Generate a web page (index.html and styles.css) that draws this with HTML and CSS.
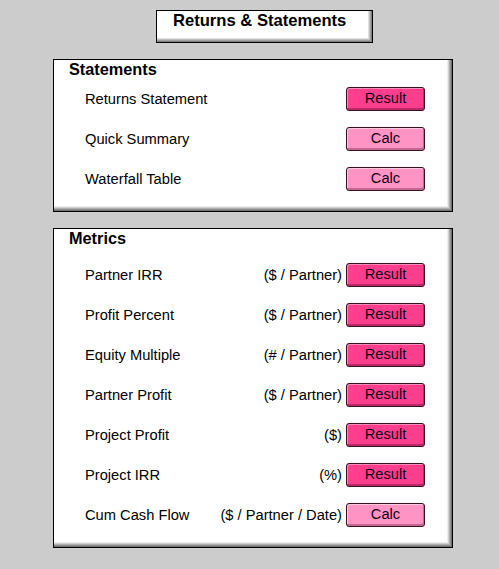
FILE: index.html
```html
<!DOCTYPE html>
<html>
<head>
<meta charset="utf-8">
<link rel="stylesheet" href="styles.css">
</head>
<body>
<div class="title">Returns &amp; Statements</div>

<div class="panel panel-statements">
  <div class="heading">Statements</div>
  <div class="rows">
    <div class="row"><span class="label">Returns Statement</span><span class="btn btn-result">Result</span></div>
    <div class="row"><span class="label">Quick Summary</span><span class="btn btn-calc">Calc</span></div>
    <div class="row"><span class="label">Waterfall Table</span><span class="btn btn-calc">Calc</span></div>
  </div>
</div>

<div class="panel panel-metrics">
  <div class="heading">Metrics</div>
  <div class="rows">
    <div class="row"><span class="label">Partner IRR</span><span class="unit">($ / Partner)</span><span class="btn btn-result">Result</span></div>
    <div class="row"><span class="label">Profit Percent</span><span class="unit">($ / Partner)</span><span class="btn btn-result">Result</span></div>
    <div class="row"><span class="label">Equity Multiple</span><span class="unit">(# / Partner)</span><span class="btn btn-result">Result</span></div>
    <div class="row"><span class="label">Partner Profit</span><span class="unit">($ / Partner)</span><span class="btn btn-result">Result</span></div>
    <div class="row"><span class="label">Project Profit</span><span class="unit">($)</span><span class="btn btn-result">Result</span></div>
    <div class="row"><span class="label">Project IRR</span><span class="unit">(%)</span><span class="btn btn-result">Result</span></div>
    <div class="row"><span class="label">Cum Cash Flow</span><span class="unit">($ / Partner / Date)</span><span class="btn btn-calc">Calc</span></div>
  </div>
</div>
</body>
</html>
```

FILE: styles.css
```css
* { box-sizing: border-box; }
html, body {
  margin: 0;
  padding: 0;
  background: #cccccc;
  font-family: "Liberation Sans", Arial, sans-serif;
  color: #000;
}
body {
  padding-top: 10px;
  width: 499px;
  height: 569px;
  overflow: hidden;
}
.title {
  margin-left: 156px;
  width: 217px;
  height: 33px;
  background: #fff;
  border: 1px solid #000;
  box-shadow: inset -1px -1px 0 #808080, inset -2px -2px 0 #a0a0a0, inset -3px -3px 0 #c0c0c0, inset -4px -4px 0 #e0e0e0;
  font-weight: bold;
  font-size: 16.6px;
  line-height: 19px;
  padding-left: 16px;
  padding-top: 0px;
}
.panel {
  margin-left: 53px;
  width: 400px;
  background: #fff;
  border: 1px solid #000;
  box-shadow: inset -1px -1px 0 #707070, inset -2px -2px 0 #909090, inset -3px -3px 0 #b0b0b0, inset -4px -4px 0 #d0d0d0, inset -5px -5px 0 #ececec;
  padding: 0 27px 12px 0;
}
.panel-statements {
  margin-top: 16px;
  height: 153px;
}
.panel-metrics {
  margin-top: 16px;
  height: 320px;
}
.heading {
  font-weight: bold;
  font-size: 16.3px;
  line-height: 18px;
  padding-left: 15px;
}
.panel-statements .rows { margin-top: 1px; }
.panel-metrics .rows { margin-top: 8px; }
.row {
  display: flex;
  align-items: center;
  height: 40px;
  padding-left: 31px;
  font-size: 14.7px;
}
.label { flex: 1; }
.unit { margin-right: 4px; }
.btn {
  width: 79px;
  height: 24px;
  border: 1px solid #3a1020;
  border-radius: 3px;
  text-align: center;
  line-height: 21px;
  font-size: 14.7px;
  color: #140018;
}
.btn-result {
  background: #ff3f8e;
  box-shadow: inset -1px -2px 0 #b82a66, inset 1px 1px 0 #ff8ab8;
}
.btn-calc {
  background: #ff94c4;
  box-shadow: inset -1px -2px 0 #c06a92, inset 1px 1px 0 #ffc8e0;
}
```
